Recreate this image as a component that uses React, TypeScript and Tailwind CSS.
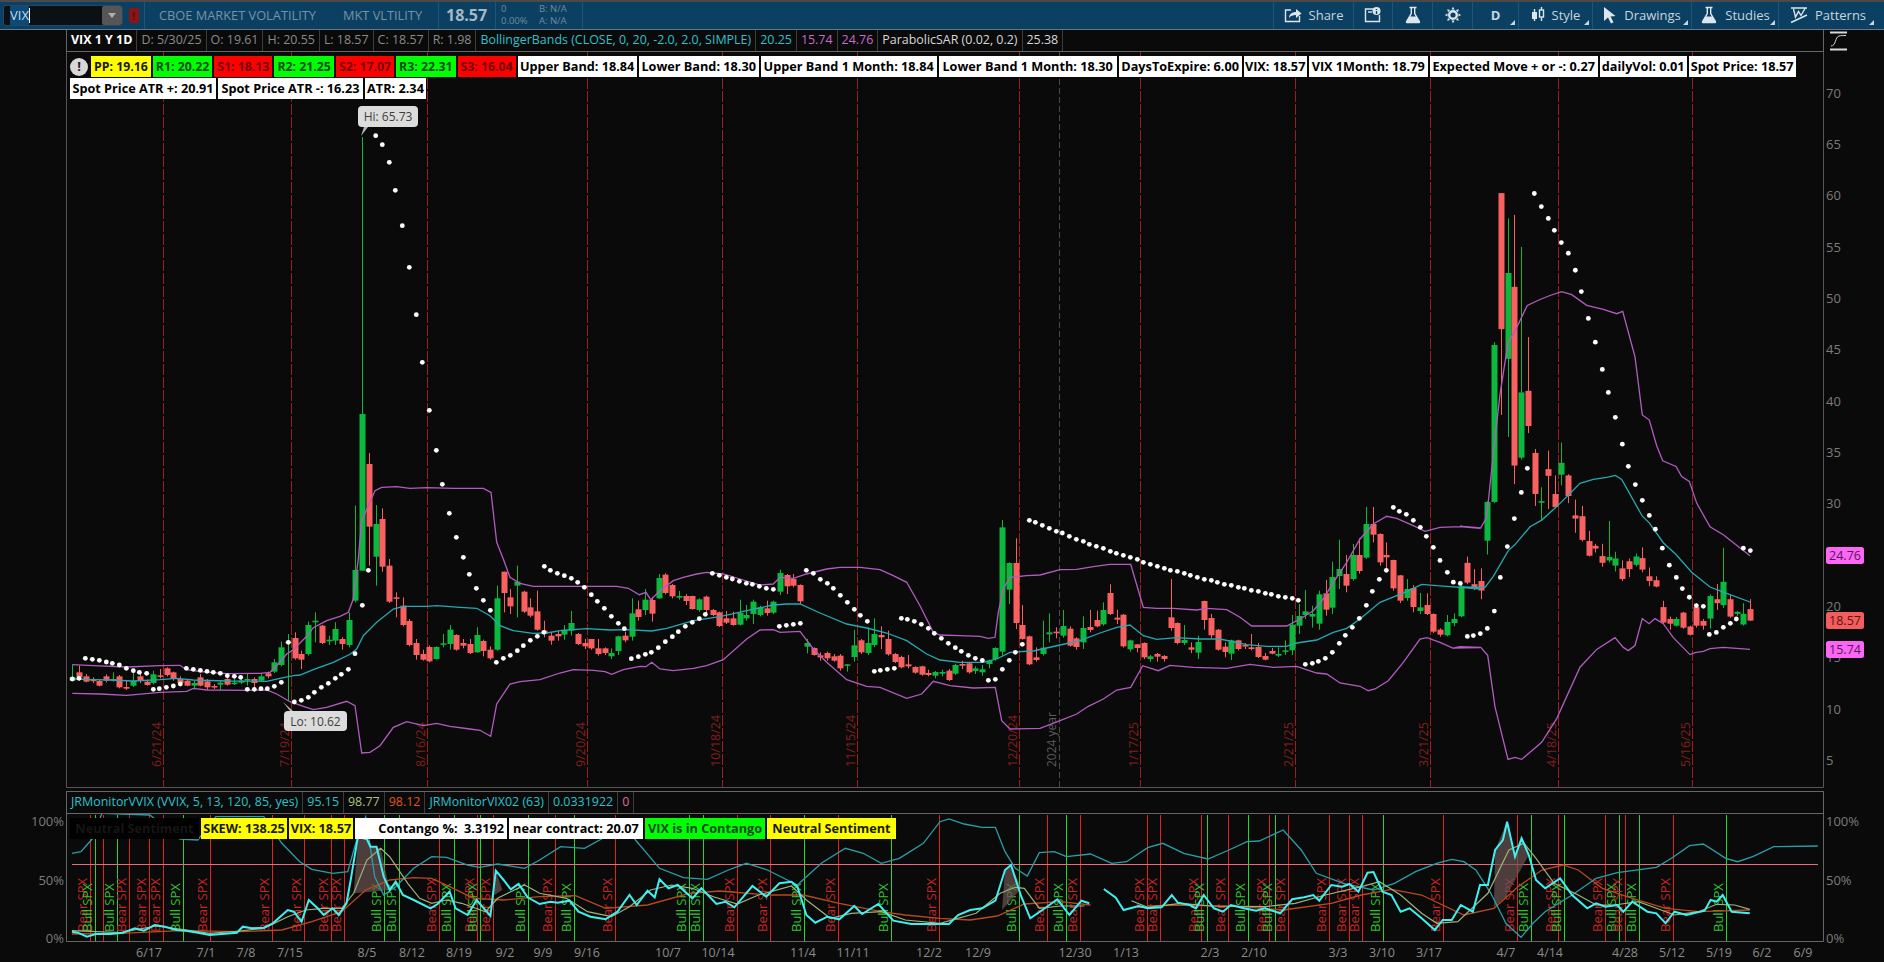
import type { ReactNode } from "react";

type Pt = [number, number];
// zx, up(1)/down(0), body top, body bottom, wick top, wick bottom (crop coordinates)
type Bar = number[];

const pairs = (a: number[], x0: number, y0: number, sx: number, sy: number): Pt[] => {
  const out: Pt[] = [];
  for (let i = 0; i < a.length; i += 2) out.push([x0 + a[i] / sx, y0 + a[i + 1] / sy]);
  return out;
};
const toPts = (p: Pt[]) => p.map(([x, y]) => `${x.toFixed(1)},${y.toFixed(1)}`).join(" ");

const bars1: Bar[] = [
  [37,1,835,845,797,845],[57,0,820,835,800,845],[78,0,832,848,825,850],[98,0,842,846,835,852],[117,0,846,860,842,862],[138,0,832,845,826,850],
  [158,1,840,845,820,848],[178,0,832,865,828,868],[198,0,864,869,845,873],[219,1,846,860,822,864],[240,0,832,846,822,852],[260,0,848,858,842,860],
  [279,1,826,852,815,856],[300,0,829,832,810,838],[320,0,808,828,805,832],[340,0,820,840,818,845],[360,0,840,852,832,860],[381,0,845,860,840,862],
  [401,1,852,860,845,872],[421,0,835,860,825,862],[441,0,847,865,840,872],[461,0,861,865,855,870],[481,1,851,857,845,873],[501,0,840,857,825,860],
  [522,1,851,854,840,858],[542,1,845,851,830,855],[562,1,840,843,825,860],[582,0,840,852,835,870],[603,1,832,845,825,848],[624,0,823,832,818,838],
  [643,1,790,818,780,822],[663,1,745,798,728,802],[685,1,728,733,705,905],[704,0,717,778,700,782],[724,0,765,782,755,810],[744,1,678,765,668,770],
  [765,1,665,670,640,730],[786,0,680,732,678,735],[806,1,722,727,710,738],[825,1,690,725,670,738],[846,0,720,735,715,752],[867,1,663,738,640,745],
  [886,1,513,605,320,610],[906,1,45,515,-786,515],[926,0,195,383,162,500],[947,1,375,473,318,560],[966,0,360,503,328,518],[987,0,500,608,480,612],
  [1007,0,595,598,580,655],[1028,0,620,678,595,682],[1047,0,666,738,660,742],[1069,0,732,768,720,782],[1089,0,765,782,752,785],[1108,0,744,787,740,790],
  [1128,1,744,780,742,782],[1149,1,733,737,705,745],[1170,1,692,735,678,752],[1189,0,708,752,706,755],[1209,0,732,740,720,748],[1230,0,735,762,720,765],
  [1250,1,708,760,685,762],[1270,0,726,756,722,772],[1290,0,752,778,742,782],[1311,1,598,752,560,755],[1332,0,518,582,518,640],[1351,0,595,622,570,645],
  [1372,1,548,560,500,655],[1392,0,578,638,575,642],[1411,0,625,650,598,655],[1431,0,637,692,575,695],[1452,0,695,705,665,715],[1472,0,710,725,700,737],
  [1493,0,705,712,695,725],
];
const bars2: Bar[] = [
  [13,1,452,467,438,482],[33,1,432,455,396,470],[54,0,465,495,462,498],[74,0,492,502,480,510],[93,0,480,508,480,512],[114,0,508,525,480,530],
  [134,0,508,522,505,528],[154,1,522,532,508,540],[174,1,472,516,470,528],[195,0,470,484,458,490],[215,1,403,473,358,485],[235,0,391,414,365,425],
  [255,1,362,393,330,408],[276,0,363,404,355,428],[296,1,297,358,285,360],[316,0,287,342,283,346],[336,0,318,352,315,358],[357,1,351,356,336,362],
  [377,0,351,366,345,378],[397,0,351,390,350,392],[417,1,361,393,358,398],[438,0,353,393,350,412],[458,0,393,408,390,412],[478,0,400,441,398,444],
  [498,0,418,431,396,435],[519,0,418,438,398,440],[539,1,402,437,362,440],[559,1,408,418,378,425],[579,1,368,405,362,435],[600,1,385,408,380,412],
  [620,0,388,402,365,410],[640,1,368,401,365,405],[660,1,282,338,272,348],[681,0,288,322,285,345],[700,0,300,320,285,325],[720,0,318,367,316,375],
  [741,1,492,503,480,523],[761,0,507,528,505,530],[781,0,529,535,520,545],[801,0,522,538,518,545],[821,0,532,545,525,548],[841,0,530,568,525,575],
  [862,1,556,558,555,578],[882,1,499,534,453,548],[903,0,484,520,480,525],[923,1,492,522,445,528],[943,1,465,498,418,505],[963,0,468,475,442,510],
  [984,0,480,526,455,530],[1004,0,525,549,522,552],[1024,0,534,565,530,568],[1044,0,556,562,528,568],[1065,0,564,581,562,584],[1085,0,562,587,560,590],
  [1105,0,582,588,572,592],[1125,1,579,590,576,598],[1146,1,579,584,572,592],[1166,0,575,603,570,606],[1186,1,558,584,555,588],[1206,0,555,560,545,570],
  [1226,0,553,580,550,584],[1246,1,568,576,562,585],[1267,1,571,580,558,590],[1287,1,545,555,542,568],[1306,1,507,540,505,545],[1326,1,145,518,123,530],
  [1347,1,252,332,250,375],[1368,0,252,432,178,450],[1387,0,438,480,378,482],[1407,0,472,556,470,558],[1428,0,535,543,505,548],[1448,1,506,525,425,530],
  [1468,1,460,466,403,490],[1489,0,458,462,445,478],
];
const bars3: Bar[] = [
  [8,1,441,470,393,476],[30,0,449,500,442,503],[49,0,478,504,475,512],[69,1,447,490,412,510],[90,0,444,453,393,460],[110,0,423,442,395,445],
  [129,1,393,436,370,440],[150,0,342,405,316,408],[170,0,416,422,392,435],[190,0,407,502,405,506],[210,1,484,511,482,518],[231,0,496,507,495,520],
  [251,0,492,535,490,540],[271,1,532,540,528,548],[291,0,525,533,522,548],[312,0,531,540,528,548],[332,0,415,447,300,455],[352,0,432,492,430,496],
  [372,1,483,492,438,498],[392,0,505,512,490,522],[414,1,489,521,470,540],[433,0,366,423,365,452],[453,0,417,469,405,478],[474,0,452,512,450,515],
  [494,0,503,519,490,535],[514,1,484,524,482,543],[534,0,484,510,482,514],[554,0,498,502,492,510],[574,0,505,510,465,514],[594,0,504,534,492,537],
  [615,0,531,542,522,544],[635,0,516,524,507,526],[655,1,525,530,505,534],[675,1,514,518,484,528],[696,1,437,514,408,528],[716,1,411,440,375,465],
  [736,1,397,408,333,420],[756,1,405,413,380,446],[777,1,346,434,335,452],[797,0,343,392,303,410],[817,1,294,386,248,405],[837,1,270,291,182,330],
  [858,0,285,320,228,340],[878,1,228,300,195,305],[898,0,228,276,178,284],[918,1,135,236,84,240],[938,0,135,167,84,190],[959,0,165,250,163,260],
  [979,0,228,235,190,268],[999,0,243,328,242,335],[1019,0,289,365,288,372],[1040,1,330,357,300,365],[1059,0,327,384,318,400],[1080,1,385,396,342,405],
  [1100,0,378,405,343,408],[1120,0,405,458,403,462],[1140,0,452,467,448,473],[1161,1,429,469,408,472],[1182,1,420,432,403,442],[1202,1,322,412,308,415],
];
const bars4: Bar[] = [
  [81,0,996,1046,980,1050],[101,0,1050,1060,1012,1065],[122,0,1042,1066,1010,1088],[142,1,842,940,840,975],[162,1,445,842,438,845],[183,0,61,405,61,622],
  [204,1,263,480,125,678],[223,0,298,750,116,797],[243,1,565,730,197,735],[264,0,561,650,425,668],[284,0,718,822,708,852],[304,1,840,844,805,888],
  [325,0,759,776,712,860],[345,0,822,855,775,858],[364,1,743,773,692,800],[384,0,775,827,772,845],[405,0,876,884,836,920],[426,0,878,938,852,942],
  [446,0,941,978,915,980],[465,0,953,960,948,970],[486,0,979,996,948,1006],[506,1,981,990,890,995],[526,1,985,1003,968,1018],[546,0,1010,1037,990,1042],
  [567,0,992,1012,985,1032],[588,1,980,1001,972,1005],[607,0,984,1013,957,1020],[627,0,1030,1042,1008,1055],[648,0,1040,1056,1030,1058],[669,0,1108,1147,1092,1150],
  [689,0,1138,1150,1132,1165],[708,1,1138,1155,1133,1157],[729,0,1122,1160,1120,1163],[749,0,1157,1178,1155,1180],[768,0,1108,1155,1098,1160],[789,0,1143,1155,1138,1165],
  [810,1,1080,1137,1076,1162],[830,0,1088,1098,1050,1115],[849,1,1044,1103,958,1110],[870,0,1088,1132,1078,1135],[890,1,1120,1125,1118,1130],[910,1,1125,1152,1098,1155],
  [930,0,1113,1142,1088,1143],
];

const toBars = (b: Bar[], x0: number, y0: number, sx: number, sy: number) =>
  b.map(([x, up, bt, bb, wt, wb]) => ({
    x: Math.round(x0 + x / sx),
    up: up === 1,
    top: y0 + bt / sy,
    h: Math.max(1.5, (bb - bt) / sy),
    wt: y0 + wt / sy,
    wb: y0 + wb / sy,
  }));

const candles = [
  ...toBars(bars1, 60, 400, 3, 3),
  ...toBars(bars2, 560, 480, 3, 3),
  ...toBars(bars3, 1060, 480, 3, 3),
  ...toBars(bars4, 1440, 170, 3, 2.529),
];

const dots: Pt[] = [
  ...pairs([37,840,57,838,76,778,97,781,118,784,139,789,157,793,178,798,199,808,220,815,238,820,260,823,280,871,298,869,319,865,340,861,361,855,379,808,400,811,421,814,441,817,460,820,481,823,502,830,523,832,542,835,562,871,583,871,603,869,622,869,643,862,664,850,685,730,703,909,724,904,745,895,763,880,784,865,805,853,826,838,844,826,865,811,885,764,907,619,925,514], 60, 400, 3, 3),
  [375.7,136.7],[382.3,145.7],[389.3,163.3],[395.3,191.3],[402.3,226.7],[409.3,268.3],[416.3,315.7],[422.3,363.3],
  ...pairs([1108,34,1129,154,1147,256,1168,343,1189,415,1210,475,1228,526,1249,568,1270,604,1291,634,1309,790,1330,778,1351,769,1372,755,1390,740,1411,724,1432,712,1452,700,1453,502,1471,514,1492,523], 60, 400, 3, 3),
  ...pairs([13,290,34,298,53,310,73,325,94,347,112,367,133,388,154,412,175,433,193,449,214,539,235,533,256,526,274,520,295,506,316,488,337,473,355,458,376,442,397,430,418,419,436,406,457,283,478,289,499,295,517,300,538,307,559,313,577,316,598,322,619,328,640,331,658,442,679,439,700,436,721,433,739,274,760,283,781,301,802,313,820,328,841,349,862,370,883,391,901,409,922,427,943,577,961,574,982,571,1003,568,1024,418,1042,421,1063,427,1084,436,1105,448,1123,463,1144,478,1165,493,1186,506,1204,517,1225,529,1246,538,1267,544,1285,604,1306,601,1327,571,1348,544,1366,520,1387,496,1408,124,1426,130,1447,139,1468,148,1489,157], 560, 480, 3, 3),
  ...pairs([7,162,28,172,49,181,70,187,88,196,109,202,130,208,151,217,169,223,190,229,211,235,232,241,250,250,271,256,292,262,313,268,331,274,352,277,373,283,391,289,412,295,433,301,454,304,472,310,493,316,514,319,535,325,553,328,574,334,595,337,616,343,634,346,655,352,676,355,697,358,715,364,736,556,757,553,775,547,796,538,817,520,838,493,856,469,877,445,898,418,919,379,937,337,958,301,979,274,1000,85,1018,97,1039,106,1060,124,1081,145,1099,172,1120,205], 1060, 480, 3, 3),
  ...pairs([0,990,22,1020,40,1045,61,1048,82,1182,100,1180,121,1175,142,1162,163,1118,181,1033,202,955,223,884,244,818,262,757,283,62,304,95,325,125,343,155,364,186,385,213,406,256,424,310,445,378,466,438,487,507,505,565,526,628,547,696,565,752,586,798,607,838,628,876,646,911,667,959,688,1002,709,1033,727,1061,748,1083,769,1104,790,1106,808,1177,829,1172,850,1159,871,1149,889,1138,910,959,931,965], 1440, 170, 3, 2.529),
];

const upper: Pt[] = [
  ...pairs([37,797,100,800,200,804,300,800,360,799,380,812,420,818,500,824,600,823,630,820,650,800,680,765,700,752,740,712,760,686,800,665,840,652,865,640,880,600,895,480,905,365,925,320,945,275,965,265,1010,263,1050,268,1100,266,1180,268,1270,268,1293,280,1300,340,1310,430,1330,480,1350,535,1380,553,1420,562,1500,562], 60, 400, 3, 3),
  ...pairs([50,322,170,322,205,328,238,347,258,340,272,362,300,335,340,305,370,295,410,285,440,280,490,285,540,300,600,318,640,315,660,295,700,298,740,285,800,270,840,265,900,265,960,272,1000,290,1040,310,1080,380,1120,460,1140,468,1200,470,1260,472,1285,478,1305,475,1315,400,1330,330,1350,295,1400,290,1440,288,1500,272], 560, 480, 3, 3),
  ...pairs([50,271,100,263,150,256,212,256,250,385,290,388,340,388,410,393,440,388,500,392,540,415,575,441,680,441,720,420,760,395,790,360,820,310,860,250,900,180,940,135,980,112,1010,118,1060,140,1095,157,1140,145,1200,143,1260,148], 1060, 480, 3, 3),
  ...pairs([60,903,122,908,140,880,160,720,180,570,204,440,225,410,262,345,300,330,330,320,365,310,395,318,440,345,490,355,530,366,548,360,585,475,607,622,628,635,650,700,668,738,708,752,725,778,748,790,770,845,810,905,850,925,930,978], 1440, 170, 3, 2.529),
];
const lower: Pt[] = [
  ...pairs([37,883,120,885,200,889,300,880,380,877,400,868,440,873,560,874,620,873,650,885,690,908,730,922,760,932,800,925,860,907,885,920,905,1062,930,1060,960,1040,1000,985,1040,968,1090,980,1130,973,1170,982,1230,990,1260,994,1292,1012,1310,915,1350,855,1380,848,1440,842,1500,822], 60, 400, 3, 3),
  ...pairs([40,572,100,574,135,578,155,586,190,572,240,562,258,563,275,550,300,570,340,575,400,568,440,560,490,542,560,480,600,453,640,452,660,460,720,457,760,510,800,550,860,602,920,622,960,625,1040,658,1085,645,1120,607,1170,620,1240,627,1306,625,1325,725,1350,750,1440,748,1500,725], 560, 480, 3, 3),
  ...pairs([50,705,85,682,130,660,170,633,212,625,248,560,295,575,330,559,400,565,500,568,570,556,640,565,710,562,770,582,800,585,840,612,900,622,925,635,945,630,985,605,1030,550,1080,480,1100,476,1140,490,1180,508,1200,503,1260,506], 1060, 480, 3, 3),
  ...pairs([40,1212,60,1208,122,1210,143,1230,165,1360,204,1493,225,1488,245,1493,305,1450,350,1390,420,1260,470,1215,525,1185,550,1210,565,1218,585,1205,607,1137,627,1150,645,1137,670,1150,700,1185,750,1228,765,1223,790,1220,810,1213,850,1210,930,1215], 1440, 170, 3, 2.529),
];
const middle: Pt[] = [
  ...pairs([37,840,100,842,150,843,220,846,300,842,350,838,400,843,500,846,620,847,660,838,700,830,720,828,760,812,820,790,870,766,890,750,910,710,950,670,1000,630,1030,622,1100,622,1130,620,1200,625,1250,628,1290,650,1320,680,1360,695,1420,703,1460,702,1500,695], 60, 400, 3, 3),
  ...pairs([80,449,150,453,200,452,275,456,320,448,400,425,480,413,560,395,640,378,680,375,720,375,780,402,860,435,920,447,980,462,1040,485,1100,525,1140,543,1200,550,1270,550,1310,540,1350,520,1420,516,1500,498], 560, 480, 3, 3),
  ...pairs([60,485,120,462,170,445,210,438,250,470,290,481,350,476,420,480,480,480,560,497,620,502,680,502,710,492,770,483,820,460,860,448,900,420,960,370,1040,338,1085,316,1130,320,1200,325,1260,330], 1060, 480, 3, 3),
  ...pairs([60,1057,135,1058,160,1030,205,965,225,950,270,905,305,888,355,850,420,795,460,785,500,780,526,775,545,785,607,878,628,895,670,945,708,975,755,1020,810,1057,850,1070,930,1095], 1440, 170, 3, 2.529),
];

const dateLines: [number, string][] = [
  [163, "6/21/24"],[291, "7/19/24"],[427, "8/16/24"],[587, "9/20/24"],[722, "10/18/24"],[857, "11/15/24"],
  [1019, "12/20/24"],[1140, "1/17/25"],[1295, "2/21/25"],[1430, "3/21/25"],[1558, "4/18/25"],[1692, "5/16/25"],
];

// lower pane, crop 1 x = px * 1.668, crop 2 x = (px - 940) * 1.661, y = (px - 780) * 3
const low = (a: number[]) => pairs(a, 0, 780, 1.668, 3);
const low2 = (a: number[]) => pairs(a, 940, 780, 1.661, 3);

const thick1 = [...low([120,455,130,458,145,470,160,462,185,462,205,458,225,445,240,452,258,435,275,440,295,450,310,452,330,458,350,465,370,462,395,458,405,440,420,445,440,443,455,430,480,390,490,395,503,425,515,360,530,385,540,405,555,385,565,405,578,370,585,300,597,170,612,178,618,200,628,200,640,290,650,330,660,305,672,345,690,360,718,385,730,372,750,335,760,385,780,405,795,360,818,408,827,272,840,300,852,328,865,312,880,352,900,372,918,365,930,368,950,362,965,395,985,410,1010,418,1030,395,1050,345,1062,375,1080,332,1092,352,1100,298,1115,325,1130,315,1155,355,1170,325,1195,372,1210,365,1225,382,1240,350,1255,318,1278,350,1300,310,1320,305,1330,320,1345,405,1360,428,1380,410,1400,418,1425,378,1438,402,1465,372,1490,422,1520,432]),
  ...low2([15,432,30,405,50,390,70,385,92,362,108,270,118,255,135,350,150,415,170,390,195,358,215,405,235,362,248,370])];
const thick2 = low2([272,327,292,353,305,390,330,378,345,385,368,382,385,345,395,368,415,375,425,385,438,345,455,385,470,395,483,375,505,385,525,392,540,385,565,400,585,358,605,352,620,345,630,362,650,315,668,320,680,312,695,335,710,278,720,276,735,335,750,345,765,395,780,385,800,415,822,450,835,420,850,420,865,375,885,395,897,315,910,315,922,210,935,180,942,125,955,230,966,175,978,225,990,300,1005,325,1030,295,1050,345,1075,385,1090,370,1105,380,1125,375,1135,395,1150,365,1175,395,1190,400,1205,430,1220,395,1240,405,1270,392,1280,360,1290,365,1300,345,1315,395,1345,400]);
const teal = [...low([120,220,135,215,155,175,170,100,250,105,300,177,330,180,360,110,440,110,470,190,500,245,520,268,555,280,580,275,595,180,610,110,625,290,640,345,660,320,690,265,720,230,745,232,780,255,800,262,830,252,875,265,900,240,935,200,975,205,1010,170,1040,130,1060,180,1100,265,1140,293,1180,298,1215,270,1245,250,1280,270,1330,315,1370,250,1410,205,1440,220,1470,250,1500,235,1540,190]),
  ...low2([0,125,15,117,40,132,70,142,92,142,108,215,125,265,145,288,165,218,190,215,210,230,250,222,285,250,310,245,345,203,370,190,405,220,445,237,480,210,510,185,530,183,570,150,600,210,625,280,670,310,720,330,755,310,790,275,825,250,850,238,870,245,890,270,915,340,940,430,965,472,985,430,1005,395,1050,345,1090,295,1125,278,1190,262,1215,235,1245,197,1268,192,1305,235,1325,245,1350,230,1385,200,1458,198])];
const olive1 = [...low([120,452,200,458,260,438,300,447,350,460,400,453,440,445,480,410,510,390,540,385,570,385,590,340,612,240,635,205,650,230,680,310,700,355,720,370,745,360,770,370,810,395,830,355,875,315,900,340,945,355,980,395,1020,410,1050,380,1085,330,1120,315,1155,325,1190,350,1230,372,1265,345,1320,318,1345,360,1385,415,1420,400,1470,395,1510,420]),
  ...low2([0,430,60,400,100,340,125,322,140,325,165,385,200,378,240,378])];
const olive2 = low2([318,362,345,382,400,370,450,378,540,380,590,370,640,345,700,320,730,305,765,345,800,400,825,430,860,425,910,340,945,210,970,190,990,235,1020,310,1060,345,1090,375,1120,375,1160,365,1190,385,1220,405,1260,395,1290,373,1320,375,1345,388]);
const orange1 = [...low([120,462,200,460,300,452,400,455,470,450,520,425,570,395,610,330,650,300,690,293,720,295,750,320,790,355,840,360,900,350,960,347,1010,385,1080,375,1150,340,1200,333,1280,345,1340,345,1400,370,1470,395,1510,405]),
  ...low2([0,415,50,420,95,408,140,372,200,365,250,375])];
const orange2 = low2([345,378,400,375,500,380,570,390,650,370,700,345,750,328,800,345,870,405,920,385,960,320,1000,270,1035,255,1060,270,1100,325,1150,355,1205,385,1260,395,1345,390]);
const fills = [
  low([590,340,597,170,612,178,618,200,635,205,650,330]),
  low([820,350,827,272,838,330]),
  low2([103,390,108,270,118,255,135,325]),
  low2([920,380,922,210,942,125,955,230,966,175,978,225,940,350]),
];

// [crop x, bull]
const signals1: [number, boolean][] = [
  [150,false],[158,true],[195,true],[216,false],[249,false],[272,false],[306,true],[351,false],[453,false],[507,false],[552,false],[573,false],
  [640,true],[665,true],[733,false],[757,true],[795,false],[801,true],[823,false],[880,true],[925,false],[958,true],[1025,false],[1149,true],
  [1172,true],[1229,false],[1285,false],[1341,true],[1398,false],[1486,true],[1567,false],
];
const signals2: [number, boolean][] = [
  [132,true],[177,false],[210,true],[232,false],[344,false],[366,false],[434,false],[443,true],[479,false],[512,true],[546,false],[557,true],[578,false],
  [646,false],[680,false],[701,false],[736,true],[835,false],[958,false],[981,true],[1027,false],[1037,true],[1105,false],[1127,true],[1138,false],[1161,true],[1217,false],[1306,true],
];
const signals = [
  ...signals1.map(([x, b]) => ({ x: Math.round(x / 1.668), bull: b })),
  { x: 103, bull: false, silent: true },
  ...signals2.map(([x, b]) => ({ x: Math.round(940 + x / 1.661), bull: b })),
];

const timeLabels: [number, string][] = [
  [149,"6/17"],[206,"7/1"],[246,"7/8"],[290,"7/15"],[367,"8/5"],[412,"8/12"],[459,"8/19"],[505,"9/2"],[543,"9/9"],[587,"9/16"],[668,"10/7"],[718,"10/14"],
  [803,"11/4"],[853,"11/11"],[929,"12/2"],[978,"12/9"],[1075,"12/30"],[1126,"1/13"],[1210,"2/3"],[1254,"2/10"],[1338,"3/3"],[1382,"3/10"],[1429,"3/17"],
  [1506,"4/7"],[1550,"4/14"],[1625,"4/28"],[1672,"5/12"],[1719,"5/19"],[1762,"6/2"],[1803,"6/9"],
];

function Corner() {
  return <span className="absolute bottom-[4px] right-[3px] h-0 w-0 border-b-[5px] border-l-[5px] border-b-[#c8d6df] border-l-transparent" />;
}

function HeaderBtn({ w, children, corner }: { w: string; children: ReactNode; corner?: boolean }) {
  return (
    <div className={`relative flex h-full items-center justify-center gap-[7px] border-l border-[#1d5678] text-[13px] text-[#c6d5df] ${w}`}>
      {children}
      {corner && <Corner />}
    </div>
  );
}

function Icon({ children, w = 18 }: { children: ReactNode; w?: number }) {
  return (
    <svg width={w} height="18" viewBox={`0 0 ${w} 18`} fill="none" stroke="#dce6ec" strokeWidth="1.4">
      {children}
    </svg>
  );
}

const FlaskPaths = () => (
  <>
    <path d="M5.5 1.5h7M7.3 1.5v6L2.6 15.6q-.4 1 .8 1h11.2q1.2 0 .8-1L10.7 7.5v-6" />
    <path d="M5.4 10.5h7.2l3 6H2.4z" fill="#dce6ec" stroke="none" />
  </>
);

function Info({ c = "text-[#8a8a8a]", children, bold }: { c?: string; children: ReactNode; bold?: boolean }) {
  return <div className={`flex items-center whitespace-pre border-r border-[#3c3c3c] px-[4px] text-[12.45px] ${c} ${bold ? "font-bold" : ""}`}>{children}</div>;
}

// small = the short pivot chips, which run a touch tighter than the wordy ones
function Chip({ c = "bg-white text-black", className = "", small, children }: { c?: string; className?: string; small?: boolean; children: ReactNode }) {
  return (
    <div className={`flex h-[21px] items-center justify-center whitespace-pre px-[3px] font-bold ${small ? "text-[12.3px]" : "text-[12.7px]"} ${c} ${className}`}>
      {children}
    </div>
  );
}

const GREEN = "bg-[#00ff00] text-[#064a1c]";
const RED = "bg-[#ff0000] text-[#6e0a0a]";
const YEL = "bg-[#ffff00] text-[#1a1a00]";

function MainChart() {
  const axis = [70, 65, 60, 55, 50, 45, 40, 35, 30, 20, 15, 10, 5];
  const py = (v: number) => 812.9 - 10.27 * v;
  return (
    <svg width="1884" height="736" viewBox="0 53 1884 736" className="block">
      <path d="M66.5 53V788.5H1823.5V53" stroke="#555" fill="none" />
      {dateLines.map(([x, t]) => (
        <g key={t}>
          <line x1={x + 0.5} x2={x + 0.5} y1="53" y2="788" stroke="#9a1f1f" strokeDasharray="11 2" />
          <text x={x - 2} y="768" transform={`rotate(-90 ${x - 2} 768)`} fontSize="12.5" fill="#821f1f">{t}</text>
        </g>
      ))}
      <line x1="1059.5" x2="1059.5" y1="53" y2="788" stroke="#4a4a4a" strokeDasharray="6 3" />
      <text x="1056" y="768" transform="rotate(-90 1056 768)" fontSize="12" fill="#5a5a5a">2024 year</text>
      {candles.map((b, i) => (
        <g key={i}>
          <line x1={b.x + 0.5} x2={b.x + 0.5} y1={b.wt} y2={b.wb} stroke={b.up ? "#0cb83e" : "#f96161"} />
          <rect x={b.x - 2.5} y={b.top} width="6" height={b.h} fill={b.up ? "#0cb83e" : "#f96161"} />
        </g>
      ))}
      <polyline points={toPts(upper)} fill="none" stroke="#b25cc0" strokeWidth="1.3" />
      <polyline points={toPts(lower)} fill="none" stroke="#b25cc0" strokeWidth="1.3" />
      <polyline points={toPts(middle)} fill="none" stroke="#25a9b2" strokeWidth="1.3" />
      {dots.map(([x, y], i) => (
        <circle key={i} cx={x} cy={y} r="2.4" fill="#fff" />
      ))}
      <path d="M364 128l-3 9 7-9z" fill="#b5b5b5" />
      <rect x="358" y="107" width="60" height="21" rx="4" fill="#dcdcdc" />
      <text x="388" y="122" textAnchor="middle" fontSize="12" fill="#3e3e3e">Hi: 65.73</text>
      <path d="M290 712l-7-9 10 9z" fill="#b5b5b5" />
      <rect x="284" y="712" width="63" height="20" rx="4" fill="#dcdcdc" />
      <text x="315.5" y="727" textAnchor="middle" fontSize="12" fill="#3e3e3e">Lo: 10.62</text>
      {axis.map((v) => (
        <text key={v} x="1826" y={py(v) + 4.5} fontSize="13" fill="#7c7c7c">{v}</text>
      ))}
      <rect x="1826" y="548" width="38" height="17" rx="2.5" fill="#fb66f5" />
      <text x="1845" y="561" textAnchor="middle" fontSize="12.5" fill="#5a1657">24.76</text>
      <rect x="1826" y="613" width="38" height="17" rx="2.5" fill="#f25d5d" />
      <text x="1845" y="626" textAnchor="middle" fontSize="12.5" fill="#5e1414">18.57</text>
      <rect x="1826" y="642" width="38" height="17" rx="2.5" fill="#fb66f5" />
      <text x="1845" y="655" textAnchor="middle" fontSize="12.5" fill="#5a1657">15.74</text>
    </svg>
  );
}

function LowerChart() {
  return (
    <svg width="1884" height="148" viewBox="0 814 1884 148" className="block">
      <path d="M66.5 814V941.5H1823.5V814" stroke="#666" fill="none" />
      {signals.map((s, i) => (
        <g key={i}>
          <line x1={s.x + 0.5} x2={s.x + 0.5} y1="815" y2="941" stroke={s.bull ? "#22d82c" : "#e02222"} />
          {!("silent" in s) && (
            <text x={s.x - 3} y="932" transform={`rotate(-90 ${s.x - 3} 932)`} fontSize="13" fill={s.bull ? "#2fc52f" : "#c92424"}>
              {s.bull ? "Bull SPX" : "Bear SPX"}
            </text>
          )}
        </g>
      ))}
      <line x1="72" x2="1818" y1="864.5" y2="864.5" stroke="#ec6a78" />
      {fills.map((f, i) => (
        <polygon key={i} points={toPts(f)} fill="#6a5252" fillOpacity="0.7" />
      ))}
      <polyline points={toPts(orange1)} fill="none" stroke="#b84a20" strokeWidth="1.3" />
      <polyline points={toPts(orange2)} fill="none" stroke="#b84a20" strokeWidth="1.3" />
      <polyline points={toPts(teal)} fill="none" stroke="#2a9fa8" strokeWidth="1.3" />
      <polyline points={toPts(olive1)} fill="none" stroke="#9fb27a" strokeWidth="1.2" />
      <polyline points={toPts(olive2)} fill="none" stroke="#9fb27a" strokeWidth="1.2" />
      <polyline points={toPts(thick1)} fill="none" stroke="#3ff0f0" strokeWidth="2" />
      <polyline points={toPts(thick2)} fill="none" stroke="#3ff0f0" strokeWidth="2" />
      <g fontSize="13" fill="#7c7c7c">
        <text x="64" y="826" textAnchor="end">100%</text>
        <text x="64" y="885" textAnchor="end">50%</text>
        <text x="64" y="943" textAnchor="end">0%</text>
        <text x="1826" y="826">100%</text>
        <text x="1826" y="885">50%</text>
        <text x="1826" y="943">0%</text>
      </g>
      <g fontSize="12.5" fill="#8a8a8a" textAnchor="middle">
        {timeLabels.map(([x, t]) => (
          <text key={t} x={x} y="957">{t}</text>
        ))}
      </g>
    </svg>
  );
}

export default function App() {
  return (
    <div className="flex h-[962px] w-[1884px] flex-col overflow-hidden bg-[#0a0a0a] text-[12px] [font-family:'Open_Sans',sans-serif]">
      {/* Top bar */}
      <div className="flex h-[30px] items-stretch border-t-[2px] border-b border-t-[#4b4a48] border-b-[#66788a] bg-[#0c4062]">
        <div className="flex w-[144px] items-center pl-[3px]">
          <div className="flex h-[21px] w-[120px] items-center justify-between rounded-[3px] border border-[#27475e] bg-[#0b1014] pl-[6px]">
            <span className="flex items-center text-[13px] text-[#c5dcea]">
              <span className="bg-[#0c4a78]">VIX</span>
              <span className="h-[15px] w-px bg-white" />
            </span>
            <span className="flex h-full w-[20px] items-center justify-center rounded-[2px] bg-[#565656]">
              <span className="h-0 w-0 border-x-[4px] border-t-[5px] border-x-transparent border-t-[#b0b0b0]" />
            </span>
          </div>
          <div className="relative ml-[5px] flex h-[21px] w-[11px] items-center justify-center">
            <span className="flex h-[15px] w-[10px] items-center justify-center rounded-[2px] bg-[#8c1414] text-[11px] font-bold leading-none text-[#5e0c0c]">!</span>
          </div>
        </div>
        <div className="flex w-[294px] items-center gap-[27px] border-l border-[#1d5678] pl-[14px] text-[12.8px] text-[#7792a6]">
          <span>CBOE MARKET VOLATILITY</span>
          <span>MKT VLTILITY</span>
        </div>
        <div className="flex w-[57px] items-center border-l border-[#1d5678] pl-[7px] text-[16px] font-bold text-[#a5b8c5]">18.57</div>
        <div className="flex w-[44px] flex-col justify-center border-l border-[#1d5678] pl-[5px] text-[9.5px] leading-[12px] text-[#6c8aa0]">
          <span>0</span>
          <span>0.00%</span>
        </div>
        <div className="flex w-[43px] flex-col justify-center text-[9.5px] leading-[12px] text-[#6c8aa0]">
          <span>B: N/A</span>
          <span>A: N/A</span>
        </div>
        <div className="border-l border-[#1d5678]" />
        <div className="ml-auto flex items-stretch pr-[7px]">
          <HeaderBtn w="w-[80px]">
            <Icon>
              <path d="M7 4H1.5v11.5h14V10" />
              <path d="M5 12c0-4 3.5-6 7-6V3l5.5 4.5L12 12V9c-3 0-5.500 .8-7 3z" fill="#dce6ec" stroke="none" />
            </Icon>
            Share
          </HeaderBtn>
          <HeaderBtn w="w-[39px]">
            <Icon>
              <path d="M12 3H1.500v12.500h14V9" />
              <path d="M4 6h4" />
              <circle cx="12.500" cy="5" r="4" fill="#dce6ec" stroke="none" />
              <path d="M12.500 3v1M12.500 5v3" stroke="#0c4062" />
            </Icon>
          </HeaderBtn>
          <HeaderBtn w="w-[40px]">
            <Icon><FlaskPaths /></Icon>
          </HeaderBtn>
          <HeaderBtn w="w-[40px]">
            <Icon>
              <circle cx="9" cy="9" r="3.800" strokeWidth="2.400" />
              {[0, 45, 90, 135, 180, 225, 270, 315].map((a) => (
                <path key={a} d="M7.500 3.500L9 .8l1.500 2.700z" fill="#dce6ec" stroke="none" transform={`rotate(${a} 9 9)`} />
              ))}
            </Icon>
          </HeaderBtn>
          <HeaderBtn w="w-[46px]" corner>
            <span className="font-bold">D</span>
          </HeaderBtn>
          <HeaderBtn w="w-[74px]" corner>
            <Icon w={14}>
              <path d="M3.500 3v12M10.500 1v14" />
              <rect x="1" y="6" width="5" height="7" fill="#dce6ec" stroke="none" />
              <rect x="8.500" y="4" width="4" height="7" fill="#0c4062" />
            </Icon>
            Style
          </HeaderBtn>
          <HeaderBtn w="w-[99px]" corner>
            <Icon w={14}>
              <path d="M1 1v14l4-3.500 3 6 2.500-1.200-3-5.800 5-.5z" fill="#dce6ec" stroke="none" />
            </Icon>
            Drawings
          </HeaderBtn>
          <HeaderBtn w="w-[87px]" corner>
            <Icon><FlaskPaths /></Icon>
            Studies
          </HeaderBtn>
          <HeaderBtn w="w-[99px]" corner>
            <Icon>
              <path d="M1 2h16M3.500 3l2 8 3-5.500 2.500 4 4-7M1 16.500L17 9" />
            </Icon>
            Patterns
          </HeaderBtn>
        </div>
      </div>

      {/* Study header */}
      <div className="flex h-[23px]">
        <div className="w-[66px]" />
        <div className="flex w-[1758px] items-stretch border-x border-b border-[#666]">
          <Info c="text-white" bold>VIX 1 Y 1D</Info>
          <Info>D: 5/30/25</Info>
          <Info>O: 19.61</Info>
          <Info>H: 20.55</Info>
          <Info>L: 18.57</Info>
          <Info>C: 18.57</Info>
          <Info>R: 1.98</Info>
          <Info c="text-[#27c4ce]">BollingerBands (CLOSE, 0, 20, -2.0, 2.0, SIMPLE)</Info>
          <Info c="text-[#27c4ce]">20.25</Info>
          <Info c="text-[#c86ad0]">15.74</Info>
          <Info c="text-[#c86ad0]">24.76</Info>
          <Info c="text-[#d8d8d8]">ParabolicSAR (0.02, 0.2)</Info>
          <Info c="text-[#d8d8d8]">25.38</Info>
        </div>
        <div className="flex flex-1 pl-[5px] pt-[1px]">
          <svg width="20" height="20" viewBox="0 0 20 20" fill="none" stroke="#d8d8d8">
            <path d="M1 1.500h17M1 18.500h17" strokeWidth="2" />
            <path d="M2 15c5 0 4-9 8-10 2-.5 4-.5 7-.5" strokeWidth="1" />
          </svg>
        </div>
      </div>

      {/* Price pane */}
      <div className="relative h-[736px]">
        <MainChart />
        <div className="absolute left-[70px] top-[4px] flex flex-col gap-px">
          <div className="flex items-center gap-[2px]">
            <div className="mr-[1px] flex h-[18px] w-[18px] items-center justify-center rounded-full bg-[#d8d8d8] text-[13px] font-bold text-[#222]">!</div>
            <Chip small c={YEL}>PP: 19.16</Chip>
            <Chip small c={GREEN}>R1: 20.22</Chip>
            <Chip small c={RED}>S1: 18.13</Chip>
            <Chip small c={GREEN}>R2: 21.25</Chip>
            <Chip small c={RED}>S2: 17.07</Chip>
            <Chip small c={GREEN}>R3: 22.31</Chip>
            <Chip small c={RED}>S3: 16.04</Chip>
            <Chip className="w-[119px]">Upper Band: 18.84</Chip>
            <Chip className="w-[120px]">Lower Band: 18.30</Chip>
            <Chip className="w-[176px]">Upper Band 1 Month: 18.84</Chip>
            <Chip className="w-[178px]">Lower Band 1 Month: 18.30</Chip>
            <Chip className="w-[123px]">DaysToExpire: 6.00</Chip>
            <Chip className="w-[63px]">VIX: 18.57</Chip>
            <Chip className="w-[119px]">VIX 1Month: 18.79</Chip>
            <Chip className="w-[168px]">Expected Move + or -: 0.27</Chip>
            <Chip className="w-[87px]">dailyVol: 0.01</Chip>
            <Chip className="w-[107px]">Spot Price: 18.57</Chip>
          </div>
          <div className="flex gap-[2px]">
            <Chip className="w-[146px]">Spot Price ATR +: 20.91</Chip>
            <Chip className="w-[145px]">Spot Price ATR -: 16.23</Chip>
            <Chip className="w-[61px]">ATR: 2.34</Chip>
          </div>
        </div>
      </div>

      {/* Lower study header */}
      <div className="mt-[3px] flex h-[23px]">
        <div className="w-[66px]" />
        <div className="flex w-[1758px] items-stretch border-x border-y border-[#666]">
          <Info c="text-[#27c4ce]">JRMonitorVVIX (VVIX, 5, 13, 120, 85, yes)</Info>
          <Info c="text-[#27c4ce]">95.15</Info>
          <Info c="text-[#a8c480]">98.77</Info>
          <Info c="text-[#e0561f]">98.12</Info>
          <Info c="text-[#27c4ce]">JRMonitorVIX02 (63)</Info>
          <Info c="text-[#27c4ce]">0.0331922</Info>
          <Info c="text-[#e0689a]">0</Info>
        </div>
      </div>

      {/* Lower pane */}
      <div className="relative h-[148px]">
        <LowerChart />
        <div className="absolute left-[70px] top-[4px] flex gap-[2px]">
          <Chip c="bg-black text-[#161616]" className="w-[129px]">Neutral Sentiment</Chip>
          <Chip c={YEL} className="w-[86px]">SKEW: 138.25</Chip>
          <Chip c={YEL} className="w-[64px]">VIX: 18.57</Chip>
          <Chip className="w-[152px] justify-end">Contango %:  3.3192</Chip>
          <Chip className="w-[134px]">near contract: 20.07</Chip>
          <Chip c={GREEN} className="w-[120px]">VIX is in Contango</Chip>
          <Chip c={YEL} className="w-[129px]">Neutral Sentiment</Chip>
        </div>
      </div>
    </div>
  );
}
